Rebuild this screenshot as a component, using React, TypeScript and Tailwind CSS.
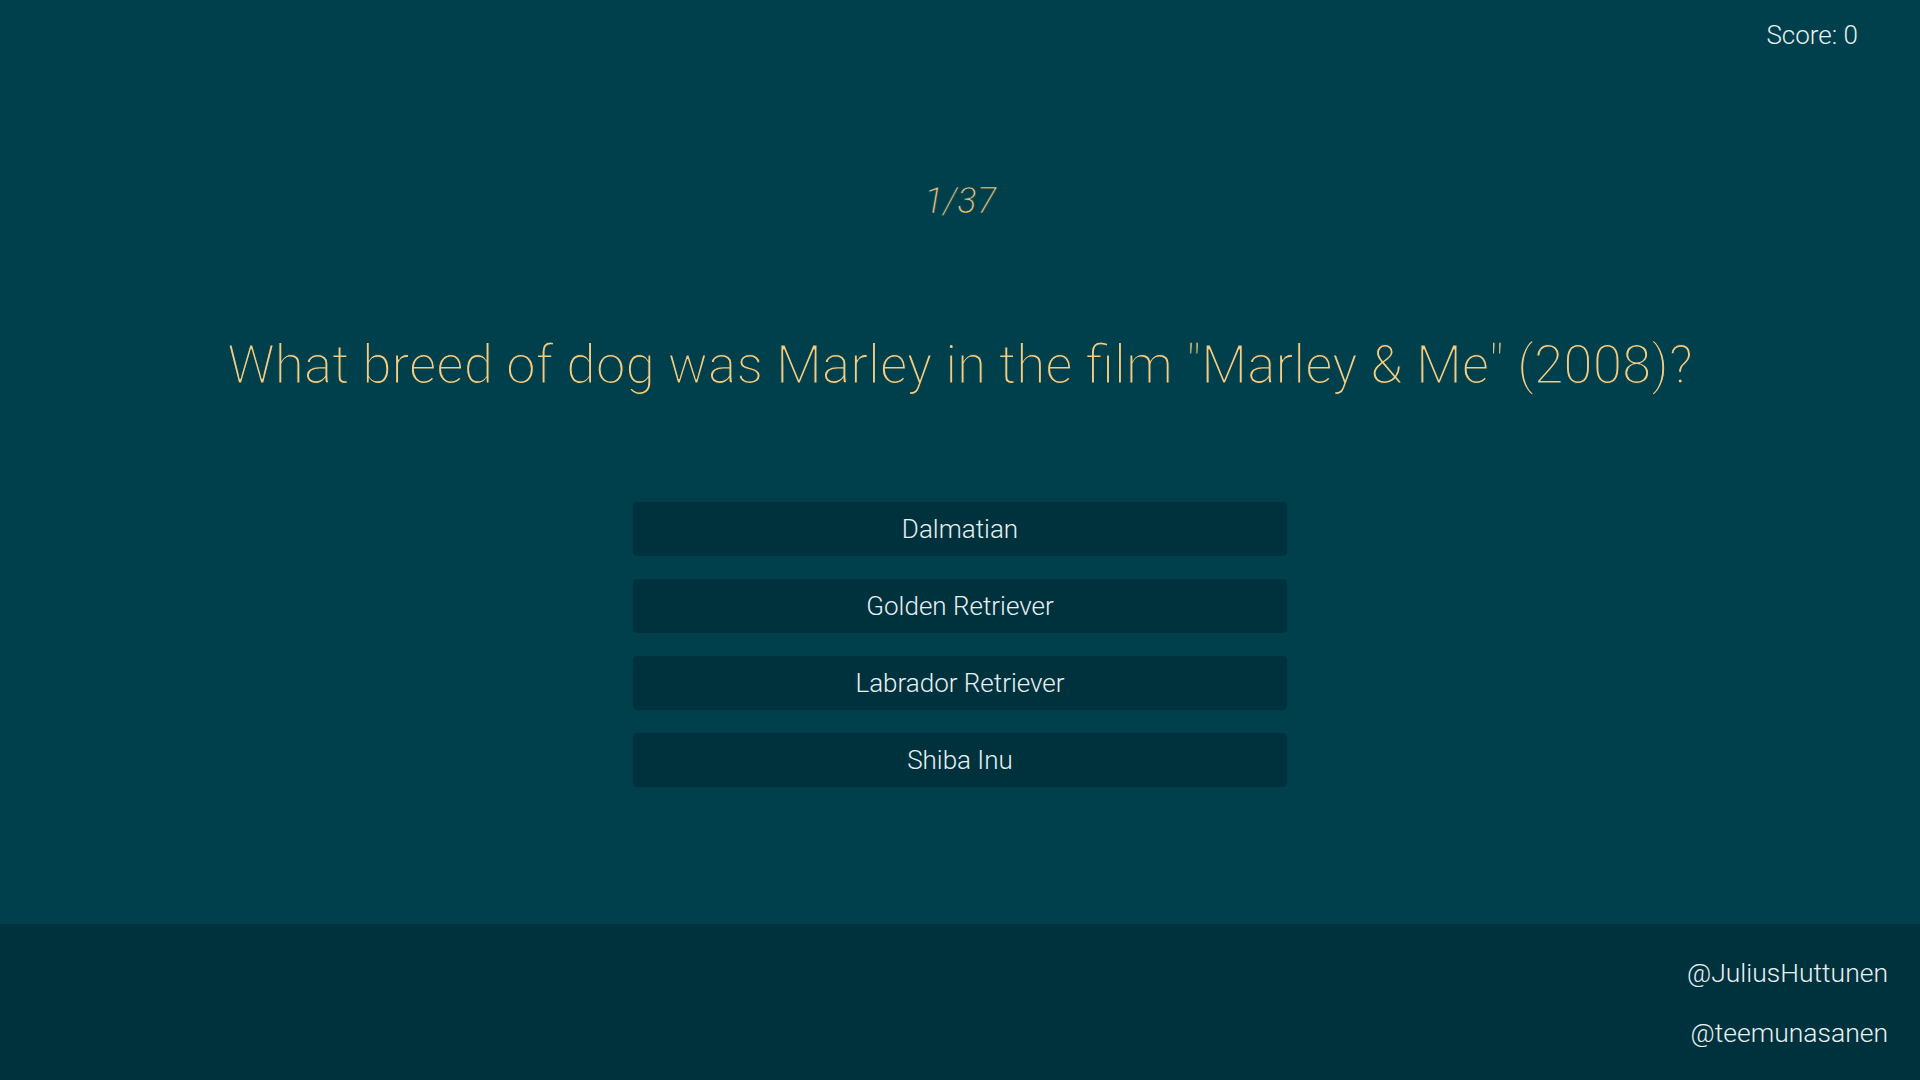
import React from "react";

const answers = ["Dalmatian", "Golden Retriever", "Labrador Retriever", "Shiba Inu"];

export default function App() {
  return (
    <div
      className="w-full min-h-screen flex flex-col bg-[#003f4c] font-light"
      style={{ fontFamily: "'Roboto Light', Roboto, 'Liberation Sans', sans-serif" }}
    >
      <main className="h-[924px] flex flex-col items-center">
        <div className="w-full flex justify-end pt-[19px] pr-[62px]">
          <span className="text-[26px] leading-[32px] text-[#e8f0f1]">Score: 0</span>
        </div>
        <div className="mt-[126px] text-[36px] leading-[48px] italic text-[#f6cd80] [-webkit-text-stroke:0.6px_#003f4c]">1/37</div>
        <h1 className="mt-[108px] text-[53px] leading-[64px] font-light text-[#f6cd80] text-center [-webkit-text-stroke:1.2px_#003f4c]">
          What breed of dog was Marley in the film "Marley &amp; Me" (2008)?
        </h1>
        <div className="mt-[105px] w-[654px] flex flex-col gap-[23px]">
          {answers.map((a) => (
            <button
              key={a}
              className="h-[54px] w-full rounded-[4px] bg-[#00323e] text-[26px] leading-[32px] font-light text-[#e8f0f1]"
            >
              {a}
            </button>
          ))}
        </div>
      </main>
      <footer className="h-[156px] bg-[#00323e] flex flex-col items-end pt-[33px] pr-[32px] gap-[28px]">
        <span className="text-[26.5px] leading-[32px] text-[#e8f0f1]">@JuliusHuttunen</span>
        <span className="text-[26.5px] leading-[32px] text-[#e8f0f1]">@teemunasanen</span>
      </footer>
    </div>
  );
}
